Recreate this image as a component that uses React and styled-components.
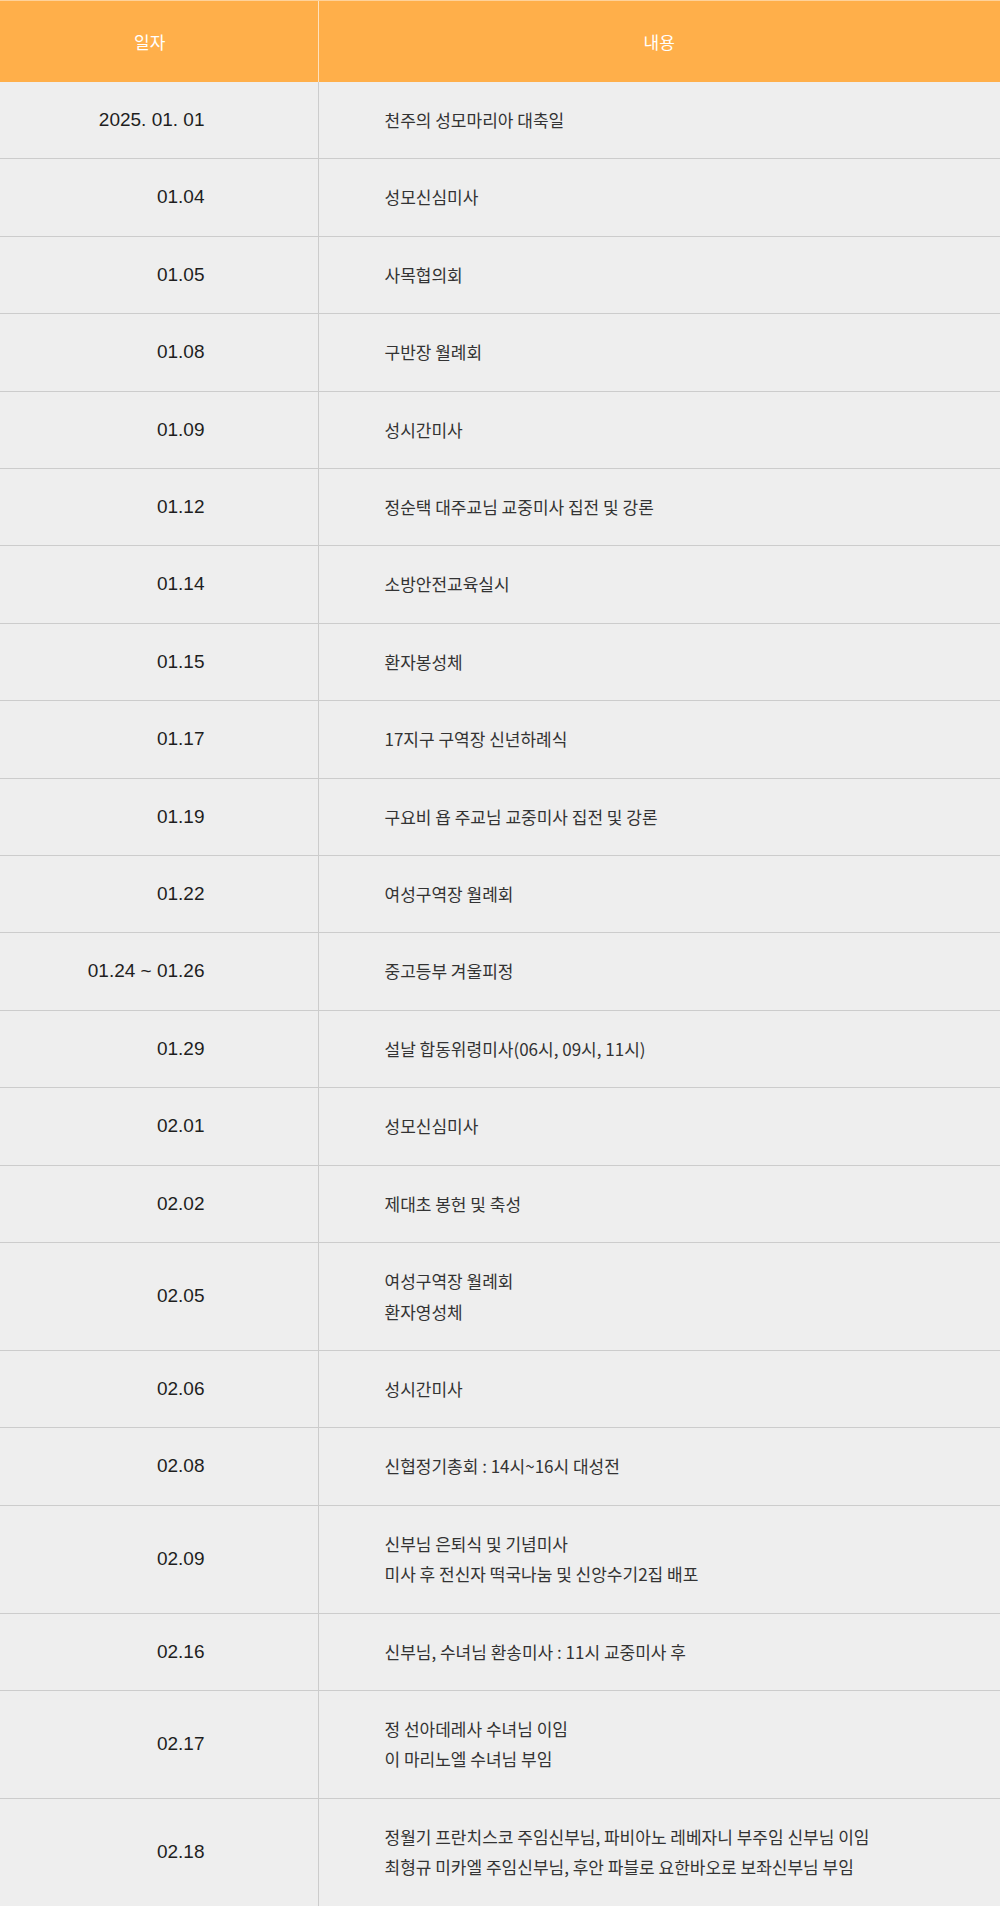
import React from "react";
import styled, { createGlobalStyle } from "styled-components";

const schedule = [
  { date: "2025. 01. 01", lines: ["천주의 성모마리아 대축일"] },
  { date: "01.04", lines: ["성모신심미사"] },
  { date: "01.05", lines: ["사목협의회"] },
  { date: "01.08", lines: ["구반장 월례회"] },
  { date: "01.09", lines: ["성시간미사"] },
  { date: "01.12", lines: ["정순택 대주교님 교중미사 집전 및 강론"] },
  { date: "01.14", lines: ["소방안전교육실시"] },
  { date: "01.15", lines: ["환자봉성체"] },
  { date: "01.17", lines: ["17지구 구역장 신년하례식"] },
  { date: "01.19", lines: ["구요비 욥 주교님 교중미사 집전 및 강론"] },
  { date: "01.22", lines: ["여성구역장 월례회"] },
  { date: "01.24 ~ 01.26", lines: ["중고등부 겨울피정"] },
  { date: "01.29", lines: ["설날 합동위령미사(06시, 09시, 11시)"] },
  { date: "02.01", lines: ["성모신심미사"] },
  { date: "02.02", lines: ["제대초 봉헌 및 축성"] },
  { date: "02.05", lines: ["여성구역장 월례회", "환자영성체"] },
  { date: "02.06", lines: ["성시간미사"] },
  { date: "02.08", lines: ["신협정기총회 : 14시~16시 대성전"] },
  { date: "02.09", lines: ["신부님 은퇴식 및 기념미사", "미사 후 전신자 떡국나눔 및 신앙수기2집 배포"] },
  { date: "02.16", lines: ["신부님, 수녀님 환송미사 : 11시 교중미사 후"] },
  { date: "02.17", lines: ["정 선아데레사 수녀님 이임", "이 마리노엘 수녀님 부임"] },
  {
    date: "02.18",
    lines: [
      "정월기 프란치스코 주임신부님, 파비아노 레베자니 부주임 신부님 이임",
      "최형규 미카엘 주임신부님, 후안 파블로 요한바오로 보좌신부님 부임",
    ],
  },
];

function App() {
  return (
    <>
      <GlobalStyle />
      <ScheduleTable>
        <colgroup>
          <col style={{ width: "318px" }} />
          <col />
        </colgroup>
        <thead>
          <tr>
            <HeadCell $first>일자</HeadCell>
            <HeadCell>내용</HeadCell>
          </tr>
        </thead>
        <tbody>
          {schedule.map((item) => (
            <tr key={item.date}>
              <DateCell>{item.date}</DateCell>
              <ContentCell>
                {item.lines.map((line) => (
                  <div key={line}>{line}</div>
                ))}
              </ContentCell>
            </tr>
          ))}
        </tbody>
      </ScheduleTable>
    </>
  );
}

const GlobalStyle = createGlobalStyle`
  body {
    margin: 0;
    background: #fff;
    font-family: "Noto Sans CJK KR", "Noto Sans", sans-serif;
  }
`;

const ScheduleTable = styled.table`
  width: 1000px;
  border-collapse: collapse;
  table-layout: fixed;
  background: #eeeeee;
`;

const HeadCell = styled.th`
  height: 81px;
  padding: 0 ${(p) => (p.$first ? "18px" : "0")} 0 0;
  background: #ffaf4a;
  border-top: 1px solid #ffd29a;
  border-left: ${(p) => (p.$first ? "none" : "1px solid #ffe2bd")};
  color: #fff;
  font-size: 17px;
  font-weight: 400;
  text-align: center;
`;

const DateCell = styled.td`
  padding: 23px 113px 23px 0;
  border-bottom: 1px solid #cccccc;
  text-align: right;
  font-family: "Liberation Sans", Arial, sans-serif;
  font-size: 19px;
  line-height: 30.4px;
  color: #1e1e1e;
  white-space: nowrap;
`;

const ContentCell = styled.td`
  padding: 23px 0 23px 66px;
  border-bottom: 1px solid #cccccc;
  border-left: 1px solid #cccccc;
  font-size: 17px;
  line-height: 30.4px;
  color: #333;
`;

export default App;
